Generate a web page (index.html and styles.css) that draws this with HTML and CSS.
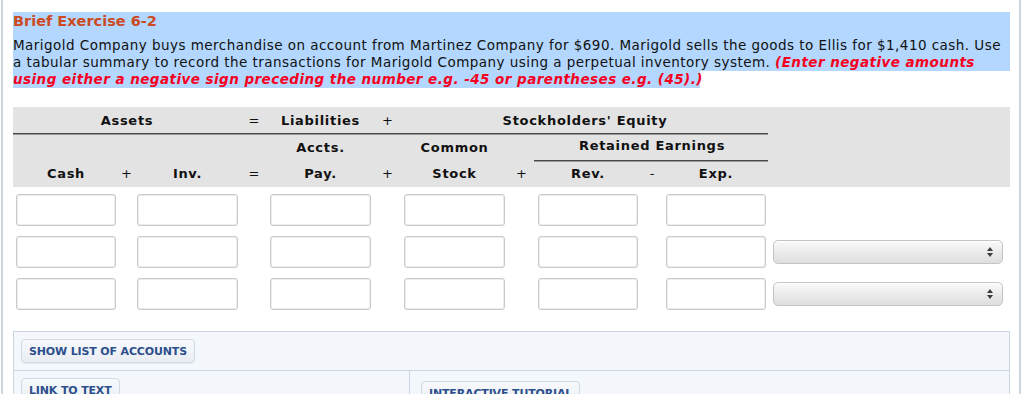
FILE: index.html
```html
<!DOCTYPE html>
<html lang="en">
<head>
<meta charset="utf-8">
<title>Brief Exercise 6-2</title>
<link rel="stylesheet" href="styles.css">
</head>
<body>
<div class="page">
  <div class="prompt">
    <h2 class="prompt-title">Brief Exercise 6-2</h2>
    <p class="prompt-text">Marigold Company buys merchandise on account from Martinez Company for $690. Marigold sells the goods to Ellis for $1,410 cash. Use a tabular summary to record the transactions for Marigold Company using a perpetual inventory system. <em class="note">(Enter negative amounts using either a negative sign preceding the number e.g. -45 or parentheses e.g. (45).)</em></p>
  </div>

  <div class="sheet">
    <div class="sheet-head">
      <div class="h r1 c-assets">Assets</div>
      <div class="h r1 op c-eq1">=</div>
      <div class="h r1 c-pay">Liabilities</div>
      <div class="h r1 op c-plus2">+</div>
      <div class="h r1 c-equity">Stockholders' Equity</div>
      <div class="rule rule-top"></div>

      <div class="h r2 c-pay">Accts.</div>
      <div class="h r2 c-stock">Common</div>
      <div class="h r2 c-re">Retained Earnings</div>
      <div class="rule rule-re"></div>

      <div class="h r3 c-cash">Cash</div>
      <div class="h r3 op c-plus1">+</div>
      <div class="h r3 c-inv">Inv.</div>
      <div class="h r3 op c-eq1">=</div>
      <div class="h r3 c-pay">Pay.</div>
      <div class="h r3 op c-plus2">+</div>
      <div class="h r3 c-stock">Stock</div>
      <div class="h r3 op c-plus3">+</div>
      <div class="h r3 c-rev">Rev.</div>
      <div class="h r3 op c-minus">-</div>
      <div class="h r3 c-exp">Exp.</div>
    </div>

    <div class="sheet-body">
      <input class="cell c-cash" type="text">
      <input class="cell c-inv" type="text">
      <input class="cell c-pay" type="text">
      <input class="cell c-stock" type="text">
      <input class="cell c-rev" type="text">
      <input class="cell c-exp" type="text">

      <input class="cell c-cash" type="text">
      <input class="cell c-inv" type="text">
      <input class="cell c-pay" type="text">
      <input class="cell c-stock" type="text">
      <input class="cell c-rev" type="text">
      <input class="cell c-exp" type="text">
      <div class="picker c-pick"><span class="arrows"></span></div>

      <input class="cell c-cash" type="text">
      <input class="cell c-inv" type="text">
      <input class="cell c-pay" type="text">
      <input class="cell c-stock" type="text">
      <input class="cell c-rev" type="text">
      <input class="cell c-exp" type="text">
      <div class="picker c-pick"><span class="arrows"></span></div>
    </div>
  </div>

  <div class="tools">
    <div class="tools-row">
      <button class="tool-btn" type="button">Show List of Accounts</button>
    </div>
    <div class="tools-split">
      <div class="tools-cell">
        <button class="tool-btn" type="button">Link to Text</button>
      </div>
      <div class="tools-cell tools-cell-right">
        <button class="tool-btn" type="button">Interactive Tutorial</button>
      </div>
    </div>
  </div>
</div>
</body>
</html>
```

FILE: styles.css
```css
html, body {
  margin: 0;
  padding: 0;
  background: #ffffff;
}

body {
  font-family: "DejaVu Sans", Verdana, sans-serif;
  font-size: 13px;
  color: #111111;
  overflow: hidden;
}

.page {
  width: 997px;
  margin-left: 1px;
  padding: 12px 9px 0 10px;
  border-left: 2px solid #cdd5e0;
  border-right: 2px solid #cdd5e0;
  min-height: 400px;
}

/* question prompt, shown highlighted */
.prompt {
  --hl: #b3d7fe;
  background:
    linear-gradient(var(--hl), var(--hl)) left top / 100% calc(100% - 17px) no-repeat,
    linear-gradient(var(--hl), var(--hl)) left bottom / 687px 17px no-repeat;
}

.prompt-title {
  margin: 0;
  padding-top: 0;
  height: 25px;
  line-height: 19px;
  font-size: 14.5px;
  font-weight: bold;
  color: #cc4a1f;
}

.prompt-text {
  margin: 0;
  line-height: 17px;
  font-size: 13.5px;
  letter-spacing: 0.46px;
}

.note {
  color: #f5001e;
  font-weight: bold;
  font-style: italic;
  letter-spacing: 0.45px;
}

/* tabular summary */
.sheet {
  --cols: 3px 100px 21px 101px 32px 101px 33px 101px 33px 100px 28px 100px 7px 230px 1fr;
  margin-top: 19px;
}

.sheet-head {
  display: grid;
  grid-template-columns: var(--cols);
  grid-template-rows: 26px 27px 27px;
  background: #e3e3e3;
  font-weight: bold;
  font-size: 13px;
  letter-spacing: 0.7px;
  color: #111111;
}

.h {
  text-align: center;
  align-self: center;
  white-space: nowrap;
}

.h.op {
  font-weight: normal;
  letter-spacing: 0;
}

.r1 { grid-row: 1; }
.r2 { grid-row: 2; }
.r3 { grid-row: 3; }

.c-cash   { grid-column: 2; }
.c-plus1  { grid-column: 3; }
.c-inv    { grid-column: 4; }
.c-eq1    { grid-column: 5; }
.c-pay    { grid-column: 6; }
.c-plus2  { grid-column: 7; }
.c-stock  { grid-column: 8; }
.c-plus3  { grid-column: 9; }
.c-rev    { grid-column: 10; }
.c-minus  { grid-column: 11; }
.c-exp    { grid-column: 12; }
.c-pick   { grid-column: 14; }
.c-assets { grid-column: 2 / 5; }
.c-equity { grid-column: 8 / 13; }
.c-re     { grid-column: 10 / 13; }

.r1.h { padding-top: 0; }
.r2.h { padding-top: 2px; }
.r2.c-re { align-self: start; padding-top: 5px; }
.r3.h { padding-top: 0; }

.rule {
  height: 1px;
  background: #4a4a4a;
  box-shadow: 0 1px 0 #9a9a9a;
  align-self: end;
}

.rule-top {
  grid-row: 1;
  grid-column: 1 / 13;
  margin-right: -2px;
  margin-bottom: -1px;
}

.rule-re {
  grid-row: 2;
  grid-column: 10 / 13;
  margin-left: -4px;
  margin-right: -2px;
  align-self: start;
  margin-top: 27px;
}

.sheet-body {
  display: grid;
  grid-template-columns: var(--cols);
  grid-auto-rows: 32px;
  row-gap: 10px;
  padding-top: 7px;
  align-items: center;
}

.cell {
  box-sizing: border-box;
  width: 100%;
  height: 32px;
  margin: 0;
  padding: 0 6px;
  border: 1px solid #cacaca;
  border-radius: 3px;
  background: #ffffff;
  box-shadow: inset 0 0 0 1px #ededed;
  font: inherit;
}

.picker {
  position: relative;
  box-sizing: border-box;
  height: 24px;
  margin-top: -1px;
  border: 1px solid #c4c4c4;
  border-radius: 5px;
  background: linear-gradient(#fafafa, #ececec 45%, #dedede);
  box-shadow: inset 0 1px 0 #ffffff;
}

.arrows {
  position: absolute;
  right: 8px;
  top: 6px;
  width: 7px;
  height: 10px;
}

.arrows::before,
.arrows::after {
  content: "";
  position: absolute;
  left: 0;
  border-left: 3.5px solid transparent;
  border-right: 3.5px solid transparent;
}

.arrows::before {
  top: 0;
  border-bottom: 4px solid #3c3c3c;
}

.arrows::after {
  bottom: 0;
  border-top: 4px solid #3c3c3c;
}

/* tools panel */
.tools {
  margin-top: 21px;
  border: 1px solid #ccd6e3;
  background: #f4f7fb;
}

.tools-row {
  padding: 7px 7px 7px 7px;
  border-bottom: 1px solid #ccd6e3;
}

.tools-split {
  display: grid;
  grid-template-columns: 395px 1fr;
}

.tools-cell {
  padding: 7px 7px 20px 7px;
}

.tools-cell-right {
  border-left: 1px solid #ccd6e3;
  padding-top: 10px;
  padding-left: 11px;
}

.tool-btn {
  display: inline-block;
  height: 24px;
  margin: 0;
  padding: 0 7px;
  border: 1px solid #d0d9e4;
  border-radius: 4px;
  background: linear-gradient(#f7f9fc, #e9eef4);
  box-shadow: 0 1px 1px rgba(0, 0, 0, 0.06);
  font-family: "DejaVu Sans", Verdana, sans-serif;
  font-size: 11px;
  font-weight: bold;
  text-transform: uppercase;
  color: #2c4f8c;
  letter-spacing: -0.15px;
}
```
